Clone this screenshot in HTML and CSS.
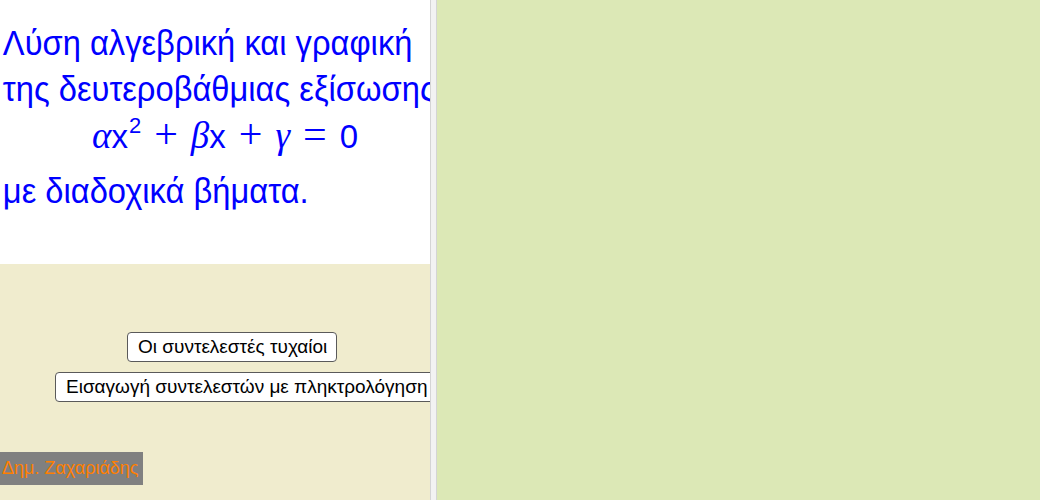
FILE: index.html
```html
<!DOCTYPE html>
<html lang="el">
<head>
<meta charset="utf-8">
<link rel="stylesheet" href="styles.css">
</head>
<body>
<div class="app">
  <div class="left">
    <div class="intro">
      <p class="line l1">Λύση αλγεβρική και γραφική</p>
      <p class="line l2">της δευτεροβάθμιας εξίσωσης</p>
      <p class="formula"><span class="g">α</span>x<sup>2</sup><span class="op">+</span><span class="g">β</span>x<span class="op">+</span><span class="g">γ</span><span class="op">=</span>0</p>
      <p class="line l4">με διαδοχικά βήματα.</p>
    </div>
    <div class="controls">
      <div class="buttons">
        <button class="btn b1">Οι συντελεστές τυχαίοι</button>
        <button class="btn b2">Εισαγωγή συντελεστών με πληκτρολόγηση</button>
      </div>
      <div class="author">Δημ. Ζαχαριάδης</div>
    </div>
  </div>
  <div class="divider"></div>
  <div class="right"></div>
</div>
</body>
</html>
```
FILE: styles.css
```css
html, body {
  margin: 0;
  padding: 0;
}
body {
  width: 1040px;
  height: 500px;
  overflow: hidden;
  font-family: "Liberation Sans", Arial, sans-serif;
}
.app {
  display: flex;
  height: 500px;
}
.left {
  width: 430px;
  flex: none;
  display: flex;
  flex-direction: column;
  overflow: hidden;
}
.intro {
  height: 264px;
  flex: none;
  background: #ffffff;
  color: #0000ff;
  white-space: nowrap;
  display: flex;
  flex-direction: column;
  align-items: flex-start;
}
.line {
  margin: 0;
  font-size: 35px;
  line-height: 40px;
  padding-left: 3px;
  transform: scaleX(0.934);
  transform-origin: 0 0;
}
.l1 { margin-top: 23px; }
.l2 { margin-top: 6px; }
.formula {
  align-self: stretch;
  margin: 8px 0 0 0;
  text-align: left;
  padding-left: 92px;
  font-size: 33px;
  line-height: 40px;
  height: 40px;
}
.formula .g {
  font-family: "Liberation Serif", "DejaVu Serif", serif;
  font-style: italic;
  font-size: 37px;
  line-height: 0;
}
.formula sup {
  font-size: 22px;
  line-height: 0;
  vertical-align: 15px;
  margin-left: 1px;
}
.formula .op {
  font-family: "Liberation Serif", "DejaVu Serif", serif;
  font-size: 42px;
  line-height: 0;
  margin: 0 13px;
}
.l4 { margin-top: 14px; }
.controls {
  flex: 1;
  background: #f0ecce;
  display: flex;
  flex-direction: column;
}
.buttons {
  display: flex;
  flex-direction: column;
  align-items: flex-start;
  padding-top: 68px;
  gap: 10px;
}
.btn {
  font-family: "Liberation Sans", Arial, sans-serif;
  font-size: 19px;
  background: #ffffff;
  color: #000000;
  border: 1px solid #5a5a5a;
  border-radius: 4px;
  height: 30px;
  padding: 0 9px 0 10px;
  white-space: nowrap;
  flex: none;
}
.b1 { margin-left: 127px; }
.b2 { margin-left: 55px; }
.author {
  margin-top: 50px;
  align-self: flex-start;
  background: #808080;
  color: #ff7f00;
  font-size: 18px;
  line-height: 33px;
  padding: 0 4px 0 2px;
}
.divider {
  width: 5px;
  flex: none;
  background: #f2f2f2;
  border-left: 1px solid #d4d4d4;
  border-right: 1px solid #d4d4d4;
}
.right {
  flex: 1;
  background: #dce8b6;
}
```
